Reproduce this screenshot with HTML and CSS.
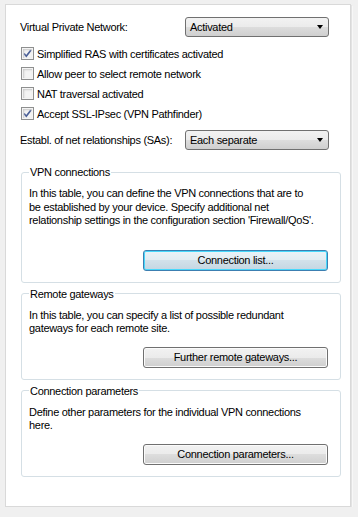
FILE: index.html
```html
<!DOCTYPE html>
<html lang="en">
<head>
    <meta charset="UTF-8">
    <meta name="viewport" content="width=device-width, initial-scale=1.0">
    <title>VPN</title>
    <link rel="stylesheet" href="styles.css">
</head>
<body>
    <div class="panel">
        <div class="row">
            <span class="label">Virtual Private Network:</span>
            <div class="combo"><span>Activated</span><span class="arrow"></span></div>
        </div>

        <div class="checks">
            <div class="check"><span class="box on"></span>Simplified RAS with certificates activated</div>
            <div class="check"><span class="box"></span>Allow peer to select remote network</div>
            <div class="check"><span class="box"></span>NAT traversal activated</div>
            <div class="check"><span class="box on"></span>Accept SSL-IPsec (VPN Pathfinder)</div>
        </div>

        <div class="row row-sa">
            <span class="label">Establ. of net relationships (SAs):</span>
            <div class="combo"><span>Each separate</span><span class="arrow"></span></div>
        </div>

        <fieldset class="group">
            <legend>VPN connections</legend>
            <p>In this table, you can define the VPN connections that are to<br>be established by your device. Specify additional net<br>relationship settings in the configuration section 'Firewall/QoS'.</p>
            <div class="btn-row tall"><button class="btn default">Connection list...</button></div>
        </fieldset>

        <fieldset class="group">
            <legend>Remote gateways</legend>
            <p>In this table, you can specify a list of possible redundant<br>gateways for each remote site.</p>
            <div class="btn-row"><button class="btn">Further remote gateways...</button></div>
        </fieldset>

        <fieldset class="group">
            <legend>Connection parameters</legend>
            <p>Define other parameters for the individual VPN connections<br>here.</p>
            <div class="btn-row"><button class="btn">Connection parameters...</button></div>
        </fieldset>
    </div>
</body>
</html>
```

FILE: styles.css
```css
body {
    margin: 0;
    background-color: #f0f0f0;
    font-family: "Liberation Sans", Arial, sans-serif;
    font-size: 11px;
    letter-spacing: -0.3px;
    color: #000;
}
.panel {
    margin: 4px 0 0 5px;
    width: 346px;
    height: 503px;
    box-sizing: border-box;
    background: #fff;
    border: 1px solid #d9d9d9;
    box-shadow: 1px 1px 0 #e3e3e3, 2px 2px 0 #f7f7f7;
    padding: 12px 0 0 14px;
}
.row {
    display: flex;
    align-items: center;
    height: 20px;
}
.label {
    width: 165px;
    white-space: nowrap;
}
.combo {
    width: 144px;
    height: 20px;
    box-sizing: border-box;
    border: 1px solid #707070;
    border-radius: 3px;
    background: linear-gradient(#f2f2f2 0%, #ebebeb 50%, #dddddd 50%, #cfcfcf 100%);
    display: flex;
    align-items: center;
    justify-content: space-between;
    padding: 0 5px 0 4px;
}
.arrow {
    width: 0;
    height: 0;
    border-left: 3.5px solid transparent;
    border-right: 3.5px solid transparent;
    border-top: 4px solid #000;
}
.checks {
    margin-top: 10px;
    display: flex;
    flex-direction: column;
    gap: 7px;
}
.check {
    display: flex;
    align-items: center;
    height: 13px;
    padding-left: 1px;
}
.box {
    width: 13px;
    height: 13px;
    box-sizing: border-box;
    border: 1px solid #8e8f8f;
    background: #f4f4f4;
    box-shadow: inset 0 0 0 1px #f4f4f4, inset 1px 1px 2px 1px #c9c9c9;
    margin-right: 3px;
    flex: none;
}
.box.on {
    background: #f4f4f4 url("data:image/svg+xml;utf8,<svg xmlns='http://www.w3.org/2000/svg' width='11' height='11'><path d='M2 5.5 L4.3 8.2 L9 2' fill='none' stroke='%234a5f97' stroke-width='1.7'/></svg>") center/11px 11px no-repeat;
}
.row-sa {
    margin-top: 10px;
}
.group {
    margin: 15px 0 0 1px;
    width: 320px;
    box-sizing: border-box;
    border: 1px solid #d5dfe5;
    border-radius: 3px;
    padding: 0 7px 11px 7px;
}
.group + .group {
    margin-top: 4px;
}
.group legend {
    padding: 0 1px;
    margin-left: 0;
    line-height: 14px;
}
.group p {
    margin: 8px 0 0 0;
    white-space: nowrap;
    line-height: 13.5px;
}
.btn-row {
    display: flex;
    justify-content: flex-end;
    margin-top: 11px;
    padding-right: 5px;
}
.btn-row.tall {
    margin-top: 22px;
}
.btn {
    width: 185px;
    height: 21px;
    font-family: inherit;
    font-size: inherit;
    letter-spacing: inherit;
    color: #000;
    border: 1px solid #707070;
    border-radius: 3px;
    background: linear-gradient(#f2f2f2 0%, #ebebeb 50%, #dddddd 50%, #cfcfcf 100%);
    box-shadow: inset 0 0 0 1px #fbfbfb;
    padding: 0;
}
.btn.default {
    border-color: #3c7fb1;
    background: linear-gradient(#eaf3f8 0%, #e1ecf2 50%, #d2e1ea 50%, #c4d6e2 100%);
    box-shadow: inset 0 0 0 1px #48d8fb;
}
```
